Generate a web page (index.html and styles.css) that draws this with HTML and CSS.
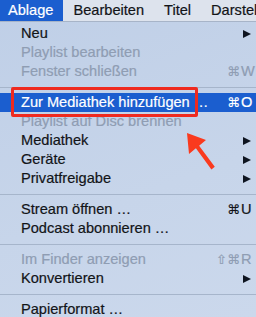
FILE: index.html
```html
<!DOCTYPE html>
<html lang="de">
<head>
    <meta charset="UTF-8">
    <meta name="viewport" content="width=device-width, initial-scale=1.0">
    <title>Ablage</title>
    <link rel="stylesheet" href="styles.css">
</head>
<body>
    <div class="menubar">
        <span class="menu active">Ablage</span>
        <span class="menu">Bearbeiten</span>
        <span class="menu">Titel</span>
        <span class="menu">Darstellung</span>
    </div>

    <ul class="dropdown">
        <li class="item"><span class="label">Neu</span><span class="sub"></span></li>
        <li class="item off"><span class="label">Playlist bearbeiten</span></li>
        <li class="item off"><span class="label">Fenster schließen</span><span class="mods">⌘</span><span class="key">W</span></li>
        <li class="sep"></li>
        <li class="item hot"><span class="label">Zur Mediathek hinzufügen …</span><span class="mods">⌘</span><span class="key">O</span></li>
        <li class="item off"><span class="label">Playlist auf Disc brennen</span></li>
        <li class="item"><span class="label">Mediathek</span><span class="sub"></span></li>
        <li class="item"><span class="label">Geräte</span><span class="sub"></span></li>
        <li class="item"><span class="label">Privatfreigabe</span><span class="sub"></span></li>
        <li class="sep"></li>
        <li class="item"><span class="label">Stream öffnen …</span><span class="mods">⌘</span><span class="key">U</span></li>
        <li class="item"><span class="label">Podcast abonnieren …</span></li>
        <li class="sep"></li>
        <li class="item off"><span class="label">Im Finder anzeigen</span><span class="mods">⇧⌘</span><span class="key">R</span></li>
        <li class="item"><span class="label">Konvertieren</span><span class="sub"></span></li>
        <li class="sep"></li>
        <li class="item"><span class="label">Papierformat …</span></li>
    </ul>

    <!-- annotation drawn over the menu -->
    <div class="callout"></div>
    <svg class="pointer" width="256" height="317" viewBox="0 0 256 317">
        <polygon points="187,133 189,154 195.9,148.2 211.4,169.5 214.8,166.8 199.1,145.8 206,140" fill="#fa3a1e"/>
    </svg>
</body>
</html>
```

FILE: styles.css
```css
body {
    margin: 0;
    width: 256px;
    height: 317px;
    overflow: hidden;
    position: relative;
    font-family: "Liberation Sans", Arial, "DejaVu Sans", sans-serif;
    font-size: 14.6px;
    color: #121418;
    -webkit-text-stroke: 0.2px currentColor;
    background: linear-gradient(160deg, #bfcfe7 0%, #c7d5ea 60%, #cbd8ec 100%);
}
.menubar {
    display: flex;
    height: 21px;
    line-height: 21px;
    background: #dde3ed;
    border-bottom: 1px solid #a7b4c8;
    white-space: nowrap;
    overflow: hidden;
}
.menu {
    padding: 0 10px;
}
.menu.active {
    padding-left: 8px;
    background: #1b5ecf;
    color: #fff;
}
.dropdown {
    list-style: none;
    margin: 0;
    padding: 2px 0 0;
}
.item {
    display: flex;
    align-items: center;
    height: 19px;
    line-height: 19px;
    padding-left: 21px;
    white-space: nowrap;
}
.item .label {
    flex: 1;
}
.item.off {
    color: #8f9db3;
}
.item.hot {
    background: #1b5ecf;
    color: #fff;
}
.mods {
    font-family: "DejaVu Sans", sans-serif;
    font-size: 13px;
    text-align: right;
}
.key {
    width: 15px;
    padding-left: 1px;
}
.sub {
    width: 0;
    height: 0;
    margin-right: 5px;
    border-top: 4px solid transparent;
    border-bottom: 4px solid transparent;
    border-left: 8px solid #0e1420;
}
.sep {
    height: 12px;
    display: flex;
    align-items: center;
}
.sep::after {
    content: "";
    flex: 1;
    height: 1px;
    background: #a6b5cb;
}
.callout {
    position: absolute;
    left: 11px;
    top: 87px;
    width: 181px;
    height: 24px;
    border: 3px solid #ef2a1f;
    border-radius: 2px;
}
.pointer {
    position: absolute;
    left: 0;
    top: 0;
}
```
